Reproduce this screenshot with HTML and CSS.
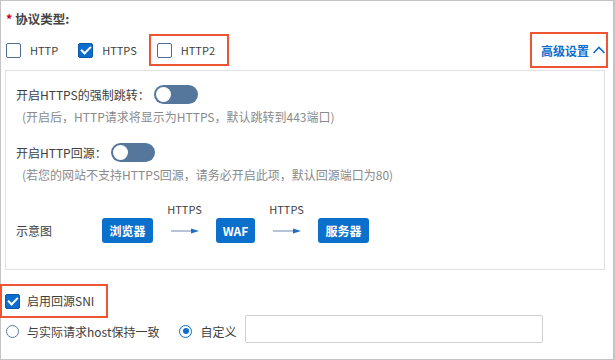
FILE: index.html
```html
<!DOCTYPE html>
<html lang="zh-CN">
  <head>
    <meta charset="UTF-8" />
    <title>协议类型</title>
    <link rel="stylesheet" href="styles.css">
  </head>
  <body>
    <div class="frame">
      <div class="field-title"><span class="req">*</span> 协议类型:</div>

      <div class="proto-row">
        <label class="check"><span class="box"></span><span class="latin">HTTP</span></label>
        <label class="check"><span class="box on"></span><span class="latin">HTTPS</span></label>
        <div class="mark">
          <label class="check"><span class="box"></span><span class="latin">HTTP2</span></label>
        </div>
        <div class="mark mark-adv">
          <a class="adv">高级设置
            <svg width="14" height="10" viewBox="0 0 14 10"><path d="M1.5 8 L7 2.5 L12.5 8" fill="none" stroke="#0b6dcd" stroke-width="1.6"/></svg>
          </a>
        </div>
      </div>

      <div class="panel">
        <div class="opt">
          <span>开启HTTPS的强制跳转：</span>
          <span class="switch"></span>
        </div>
        <div class="hint">(开启后，HTTP请求将显示为HTTPS，默认跳转到443端口)</div>

        <div class="opt opt-2">
          <span>开启HTTP回源：</span>
          <span class="switch"></span>
        </div>
        <div class="hint">(若您的网站不支持HTTPS回源，请务必开启此项，默认回源端口为80)</div>

        <div class="diagram">
          <span class="diagram-label">示意图</span>
          <span class="node node-wide">浏览器</span>
          <div class="link">
            <span class="link-text">HTTPS</span>
            <span class="link-arrow">
              <svg width="28" height="6" viewBox="0 0 28 6"><line x1="0" y1="3" x2="22" y2="3" stroke="#b7c3d6" stroke-width="2"/><path d="M20 0.5 L28 3 L20 5.5 Z" fill="#1d6fc4"/></svg>
            </span>
          </div>
          <span class="node">WAF</span>
          <div class="link">
            <span class="link-text">HTTPS</span>
            <span class="link-arrow">
              <svg width="28" height="6" viewBox="0 0 28 6"><line x1="0" y1="3" x2="22" y2="3" stroke="#b7c3d6" stroke-width="2"/><path d="M20 0.5 L28 3 L20 5.5 Z" fill="#1d6fc4"/></svg>
            </span>
          </div>
          <span class="node node-wide">服务器</span>
        </div>
      </div>

      <div class="mark mark-sni">
        <label class="check"><span class="box on"></span>启用回源SNI</label>
      </div>

      <div class="sni-row">
        <label class="radio"><span class="dot"></span>与实际请求host保持一致</label>
        <label class="radio radio-2"><span class="dot on"></span>自定义</label>
        <input class="sni-input" type="text" />
      </div>
    </div>
  </body>
</html>
```

FILE: styles.css
```css
:root {
  --text: #404040;
  --muted: #8a8a8a;
  --blue: #0b6dcd;
  --node: #0a70cc;
  --mark: #ee5535;
  --box: #4d6d92;
}

body {
  margin: 0;
  font-family: "Noto Sans CJK SC", "Open Sans", sans-serif;
  font-size: 12px;
  color: var(--text);
}

.frame {
  box-sizing: border-box;
  width: 615px;
  height: 360px;
  border: 1px solid #c4c4c4;
  border-right-width: 2px;
  padding: 7px 8px 0 4px;
}

.field-title {
  height: 22px;
  line-height: 22px;
  padding-left: 1px;
  font-size: 12.5px;
  font-weight: 700;
  color: #444;
}

.req {
  color: #d0021b;
}

.latin {
  font-size: 11px;
}

.proto-row {
  display: flex;
  align-items: center;
  height: 36px;
  margin-top: 2px;
}

.check {
  display: flex;
  align-items: center;
  gap: 9px;
  line-height: 20px;
}

.proto-row > .check:first-child {
  margin-left: 1px;
  margin-right: 20px;
}

.proto-row > .check:nth-child(2) {
  margin-right: 12px;
}

.box {
  box-sizing: border-box;
  width: 15px;
  height: 15px;
  border: 1.5px solid var(--box);
  border-radius: 2px;
  background: #fff;
  position: relative;
}

.box.on {
  background: var(--blue);
  border-color: #0a58a8;
}

.box.on::after {
  content: "";
  position: absolute;
  left: 4px;
  top: 0px;
  width: 4px;
  height: 8px;
  border: solid #fff;
  border-width: 0 2px 2px 0;
  transform: rotate(45deg);
}

.mark {
  box-sizing: border-box;
  border: 2px solid var(--mark);
  display: flex;
  align-items: center;
}

.proto-row .mark {
  width: 80px;
  height: 32px;
  padding-left: 6px;
}

.proto-row .mark-adv {
  width: 78px;
  height: 36px;
  margin-left: auto;
  margin-right: -3px;
  padding-left: 9px;
}

.adv {
  display: flex;
  align-items: center;
  gap: 3px;
  color: var(--blue);
  font-weight: 700;
  font-size: 12px;
}

.panel {
  box-sizing: border-box;
  width: 600px;
  height: 200px;
  margin-top: 2px;
  border: 1.5px solid #e2e2e2;
  padding: 12px 10px 0;
}

.opt {
  display: flex;
  align-items: center;
  gap: 4px;
  height: 22px;
}

.opt-2 {
  margin-top: 14px;
}

.switch {
  width: 44px;
  height: 19px;
  border-radius: 10px;
  background: #55779c;
  position: relative;
}

.switch::after {
  content: "";
  position: absolute;
  left: 2px;
  top: 2px;
  width: 15px;
  height: 15px;
  border-radius: 50%;
  background: #fff;
}

.hint {
  height: 20px;
  line-height: 20px;
  margin-top: 2px;
  padding-left: 6px;
  color: var(--muted);
}

.diagram {
  display: flex;
  align-items: flex-end;
  margin-top: 16px;
}

.diagram-label {
  width: 86px;
  line-height: 25px;
}

.node {
  height: 25px;
  line-height: 25px;
  width: 39px;
  border-radius: 3px;
  background: var(--node);
  color: #fff;
  text-align: center;
  font-weight: 700;
}

.node-wide {
  width: 51px;
}

.link {
  width: 63px;
  display: flex;
  flex-direction: column;
  align-items: center;
}

.link-text {
  font-size: 11px;
  line-height: 16px;
  margin-bottom: 1px;
}

.link-arrow {
  height: 25px;
  display: flex;
  align-items: center;
}

.mark-sni {
  width: 108px;
  height: 34px;
  margin-top: 14px;
  margin-left: -5px;
  padding-left: 3px;
}

.mark-sni .check {
  gap: 7px;
}

.sni-row {
  display: flex;
  align-items: center;
  height: 28px;
  margin-top: -3px;
}

.radio {
  display: flex;
  align-items: center;
  gap: 8px;
  margin-top: 4px;
}

.radio:first-child {
  margin-left: 1px;
}

.radio-2 {
  margin-left: 20px;
}

.dot {
  box-sizing: border-box;
  width: 13px;
  height: 13px;
  border-radius: 50%;
  border: 1.3px solid #5c7aa0;
  background: #fff;
  position: relative;
}

.dot.on {
  border-color: var(--blue);
}

.dot.on::after {
  content: "";
  position: absolute;
  left: 2.2px;
  top: 2.2px;
  width: 6px;
  height: 6px;
  border-radius: 50%;
  background: var(--blue);
}

.sni-input {
  box-sizing: border-box;
  width: 298px;
  height: 28px;
  margin-left: 9px;
  border: 1px solid #cfcfcf;
  border-radius: 2px;
}
```
